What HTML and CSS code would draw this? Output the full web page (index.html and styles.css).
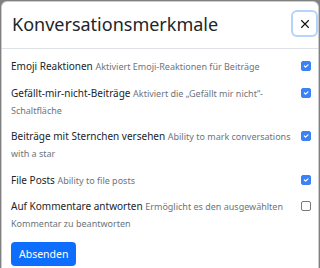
FILE: index.html
```html
<!DOCTYPE html>
<html lang="de">
<head>
    <meta charset="UTF-8">
    <meta name="viewport" content="width=device-width, initial-scale=1.0">
    <title>Konversationsmerkmale</title>
    <link rel="stylesheet" href="styles.css">
</head>
<body>
    <!-- Modal -->
    <div class="modal">
        <div class="modal-header">
            <h5 class="modal-title">Konversationsmerkmale</h5>
            <button class="btn-close" aria-label="Schließen">
                <svg viewBox="0 0 16 16" width="10" height="10"><path d="M2 2 14 14M14 2 2 14" stroke="#111" stroke-width="1.8" fill="none"/></svg>
            </button>
        </div>

        <div class="modal-body">
            <div class="feature">
                <label class="feature-text"><span class="feature-name">Emoji Reaktionen</span> <small class="feature-desc">Aktiviert Emoji-Reaktionen für Beiträge</small></label>
                <span class="check checked"></span>
            </div>
            <div class="feature">
                <label class="feature-text"><span class="feature-name">Gefällt-mir-nicht-Beiträge</span> <small class="feature-desc">Aktiviert die „Gefällt mir nicht“-Schaltfläche</small></label>
                <span class="check checked"></span>
            </div>
            <div class="feature">
                <label class="feature-text"><span class="feature-name">Beiträge mit Sternchen versehen</span> <small class="feature-desc">Ability to mark conversations with a star</small></label>
                <span class="check checked"></span>
            </div>
            <div class="feature">
                <label class="feature-text"><span class="feature-name">File Posts</span> <small class="feature-desc">Ability to file posts</small></label>
                <span class="check checked"></span>
            </div>
            <div class="feature">
                <label class="feature-text"><span class="feature-name">Auf Kommentare antworten</span> <small class="feature-desc">Ermöglicht es den ausgewählten Kommentar zu beantworten</small></label>
                <span class="check"></span>
            </div>

            <button class="btn-primary">Absenden</button>
        </div>
    </div>
</body>
</html>
```

FILE: styles.css
```css
/* General Styles */
body {
    margin: 0;
    font-family: "Noto Sans", "Open Sans", sans-serif;
    background-color: #808080;
    color: #212529;
}

/* Modal */
.modal {
    margin: 1px 1px 0 1px;
    background: #ffffff;
    border: 1px solid rgba(0, 0, 0, 0.2);
    border-radius: 6px;
}

.modal-header {
    display: flex;
    align-items: center;
    justify-content: space-between;
    padding: 10px 2px 13px 10px;
    border-bottom: 1px solid #dee2e6;
}

.modal-title {
    margin: 0;
    font-size: 18px;
    font-weight: 400;
    line-height: 22px;
}

.btn-close {
    display: flex;
    align-items: center;
    justify-content: center;
    width: 23px;
    height: 23px;
    padding: 0;
    background: #fff;
    border: none;
    border-radius: 4px;
    box-shadow: 0 0 0 2px rgba(13, 110, 253, 0.3);
}

/* Body */
.modal-body {
    display: flex;
    flex-direction: column;
    align-items: flex-start;
    gap: 9.5px;
    padding: 9px 7px 9px 9px;
}

.feature {
    display: flex;
    align-items: flex-start;
    gap: 5px;
    width: 100%;
}

.feature-text {
    flex: 1;
    font-size: 10px;
    line-height: 16px;
}

.feature-desc {
    font-size: 9px;
    color: #6c757d;
}

.check {
    flex: none;
    width: 10px;
    height: 10px;
    margin-top: 3px;
    border: 1px solid #7a7a7a;
    border-radius: 2px;
    box-sizing: border-box;
}

.check.checked {
    border-color: #3b82f6;
    background: #3b82f6 url("data:image/svg+xml,%3csvg xmlns='http://www.w3.org/2000/svg' viewBox='0 0 20 20'%3e%3cpath fill='none' stroke='%23fff' stroke-linecap='round' stroke-linejoin='round' stroke-width='3' d='m6 10 3 3 6-6'/%3e%3c/svg%3e") center / 100% no-repeat;
}

.btn-primary {
    padding: 0 8px;
    height: 24px;
    font-family: inherit;
    font-size: 10.5px;
    color: #fff;
    background-color: #0d6efd;
    border: none;
    border-radius: 4px;
}
```
